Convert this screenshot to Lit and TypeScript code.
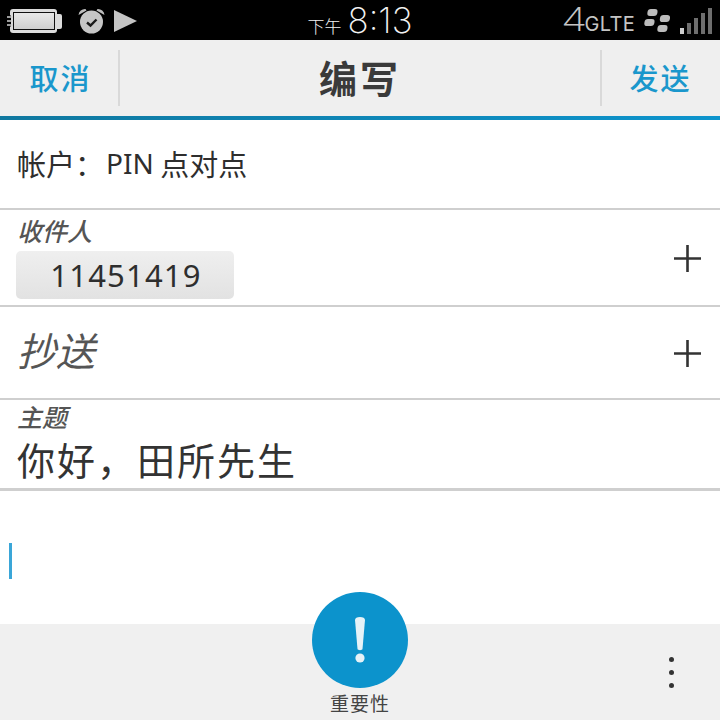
import { LitElement, html, css } from "lit";
import { customElement } from "lit/decorators.js";

@customElement("app-root")
export class AppRoot extends LitElement {
  static styles = css`
    :host { display: block; width: 720px; height: 720px; overflow: hidden; background: #fff; }
    * { box-sizing: border-box; }
    .page { width: 720px; height: 720px; display: flex; flex-direction: column; font-family: "Noto Sans CJK SC", "Noto Sans", sans-serif; color: #333; }

    .status { height: 40px; flex: none; background: #000; display: grid; grid-template-columns: 1fr auto 1fr; align-items: center; }
    .st-left { display: flex; align-items: center; padding-left: 7px; }
    .st-left svg, .st-right svg { display: block; }
    .ic-alarm { margin-left: 16px; }
    .ic-play { margin-left: 9px; }
    .st-center { display: flex; align-items: center; gap: 6px; color: #f2f2f2; height: 40px; }
    .ampm { font-size: 17px; line-height: 20px; font-weight: 300; margin-top: 10px; }
    .clock { font-family: "Inter", sans-serif; font-weight: 200; font-size: 35px; line-height: 36px; margin-top: -3px; }
    .st-right { display: flex; align-items: center; justify-content: flex-end; padding-right: 8px; }
    .net { display: flex; align-items: baseline; color: #c4c4c4; font-family: "Inter", sans-serif; margin-right: 9px; margin-top: 1px; }
    .net .four { display: inline-block; font-size: 33px; line-height: 36px; font-weight: 200; margin-right: -3px; transform: scaleX(1.3); transform-origin: right center; }
    .net .lte { font-size: 20px; line-height: 36px; font-weight: 400; letter-spacing: 0.3px; }
    .ic-signal { margin-left: 10px; }

    .header { height: 76px; flex: none; background: #efefef; display: grid; grid-template-columns: 120px 1fr 120px; align-items: center; }
    .accent { height: 4px; flex: none; background: linear-gradient(90deg, #10789f, #0d94cd); }
    .hbtn { height: 56px; padding-bottom: 2px; display: flex; align-items: center; justify-content: center; color: #1a97cc; font-size: 29px; letter-spacing: 2px; font-weight: 500; }
    .hbtn.l { border-right: 2px solid #d9d9d9; padding-left: 3px; }
    .hbtn.r { border-left: 2px solid #d9d9d9; padding-right: 1px; }
    .title { text-align: center; font-size: 38px; font-weight: 700; letter-spacing: 3px; color: #3a3a3a; line-height: 74px; padding-bottom: 2px; }

    .row { flex: none; padding-left: 17px; display: flex; align-items: center; justify-content: space-between; }
    .rule { border-bottom: 2px solid #cfcfcf; }
    .account { height: 90px; font-size: 29px; justify-content: flex-start; color: #2e2e2e; padding-bottom: 2px; }
    .account .pin { font-family: "Noto Sans", sans-serif; font-size: 28px; margin-left: 2px; }
    .recipient { height: 97px; align-items: flex-start; }
    .lbl { font-style: italic; color: #555; font-size: 25px; line-height: 28px; font-weight: 500; display: block; }
    .recipient .lbl { margin-top: 6px; }
    .chip { width: 218px; height: 48px; margin: 7px 0 0 -1px; padding-left: 2px; border-radius: 5px; background: linear-gradient(#efefef, #e2e2e2); display: flex; align-items: center; justify-content: center; font-size: 31px; letter-spacing: 1.200px; color: #2e2e2e; font-family: "Noto Sans", sans-serif; }
    .plus { width: 27px; height: 27px; flex: none; margin-right: 19px; display: block; }
    .recipient .plus { margin-top: 35px; }
    .cc { height: 93px; padding-bottom: 8px; }
    .cc .plus { margin-top: 10px; }
    .cc .big { font-style: italic; color: #555; font-size: 39px; font-weight: 400; }
    .subject { height: 91px; border-bottom-width: 3px; align-items: flex-start; }
    .subject .lbl { margin-top: 2px; }
    .subject .val { font-size: 38px; line-height: 50px; letter-spacing: 2px; color: #333; font-weight: 400; margin-top: 4px; }

    .body { flex: 1; }
    .caret { width: 3px; height: 36px; background: #3aa6d8; margin: 52px 0 0 9px; }

    .bottom { height: 96px; flex: none; background: #f0f0f0; position: relative; display: flex; justify-content: flex-end; align-items: center; padding-right: 46px; }
    .action { position: absolute; left: 312px; top: -32px; width: 96px; display: flex; flex-direction: column; align-items: center; }
    .fab { width: 96px; height: 96px; border-radius: 50%; background: #0c93cc; display: flex; align-items: center; justify-content: center; }
    .action span { font-size: 19px; line-height: 26px; margin-top: 2px; letter-spacing: 1px; color: #444; white-space: nowrap; }
    .dots { display: flex; flex-direction: column; gap: 8px; }
    .dots i { display: block; width: 5px; height: 5px; border-radius: 50%; background: #333; }
  `;

  plus() {
    return html`<svg class="plus" viewBox="0 0 27 27"><path d="M0 13.500H27M13.500 0V27" stroke="#333" stroke-width="2.600" fill="none"/></svg>`;
  }

  render() {
    return html`<div class="page">
      <div class="status">
        <div class="st-left">
          <svg width="55" height="40" viewBox="7 0 55 40">
            <defs><linearGradient id="b" x1="0" y1="0" x2="0" y2="1"><stop offset="0" stop-color="#e8e8e8"/><stop offset="1" stop-color="#cfcfcf"/></linearGradient></defs>
            <rect x="10" y="8" width="47" height="24" rx="3" fill="#dcdcdc"/>
            <rect x="55" y="13" width="7" height="15" rx="2" fill="#dcdcdc"/>
            <rect x="13" y="11" width="42" height="18" fill="#111"/>
            <rect x="14" y="12" width="40" height="16" fill="url(#b)"/>
            <path d="M9 14.500v11" stroke="#000" stroke-width="4"/>
            <path d="M7 16h6M7 20h6M7 24h6" stroke="#d0d0d0" stroke-width="1.500"/>
          </svg>
          <svg class="ic-alarm" width="27" height="40" viewBox="78 0 27 40">
            <path d="M78.500 14a6.500 6.500 0 0 1 7-6l1 1.500zM104.500 14a6.500 6.500 0 0 0-7-6l-1 1.500z" fill="#bdbdbd"/>
            <circle cx="91.500" cy="21" r="11.500" fill="#c6c6c6"/>
            <path d="M87 21.500l3.500 3 6-6" stroke="#1a1a1a" stroke-width="2.400" fill="none"/>
          </svg>
          <svg class="ic-play" width="23" height="40" viewBox="114 0 23 40"><path d="M114 9L137 20L114 31Z" fill="#c4c4c4"/></svg>
        </div>
        <div class="st-center"><span class="ampm">下午</span><span class="clock">8:13</span></div>
        <div class="st-right">
          <div class="net"><span class="four">4</span><span class="lte">GLTE</span></div>
          <svg width="26" height="40" viewBox="644 0 26 40" fill="#bcbcbc">
            <rect x="647.500" y="8" width="10" height="7" rx="3" transform="skewX(-8)" transform-origin="652 11"/>
            <rect x="644.500" y="18" width="10" height="7" rx="3" transform="skewX(-8)" transform-origin="649 21"/>
            <rect x="660" y="14" width="10" height="7" rx="3" transform="skewX(-8)" transform-origin="665 17"/>
            <rect x="657.500" y="24" width="10" height="7" rx="3" transform="skewX(-8)" transform-origin="662 27"/>
          </svg>
          <svg class="ic-signal" width="32" height="40" viewBox="680 0 32 40">
            <rect x="680" y="27" width="4" height="6" fill="#cfcfcf"/>
            <rect x="687" y="22" width="4" height="11" fill="#6e6e6e"/>
            <rect x="694" y="17" width="4" height="16" fill="#6e6e6e"/>
            <rect x="701" y="12" width="4" height="21" fill="#6e6e6e"/>
            <rect x="708" y="7" width="4" height="26" fill="#6e6e6e"/>
          </svg>
        </div>
      </div>

      <div class="header">
        <div class="hbtn l">取消</div>
        <div class="title">编写</div>
        <div class="hbtn r">发送</div>
      </div>
      <div class="accent"></div>

      <div class="row account rule"><span>帐户：</span><span class="pin">PIN</span><span>&nbsp;点对点</span></div>

      <div class="row recipient rule">
        <div><span class="lbl">收件人</span><div class="chip">11451419</div></div>
        ${this.plus()}
      </div>

      <div class="row cc rule"><span class="big">抄送</span>${this.plus()}</div>

      <div class="row subject rule">
        <div><span class="lbl">主题</span><div class="val">你好，田所先生</div></div>
      </div>

      <div class="body"><div class="caret"></div></div>

      <div class="bottom">
        <div class="action">
          <div class="fab">
            <svg width="12" height="48" viewBox="0 0 12 48"><path d="M1 4C1 2 3 1 6 1s5 1 5 3L8.500 33c-.2 1.500-4.800 1.500-5 0Z" fill="#e6f2f7"/><circle cx="6" cy="42" r="4.600" fill="#e6f2f7"/></svg>
          </div>
          <span>重要性</span>
        </div>
        <div class="dots"><i></i><i></i><i></i></div>
      </div>
    </div>`;
  }
}
